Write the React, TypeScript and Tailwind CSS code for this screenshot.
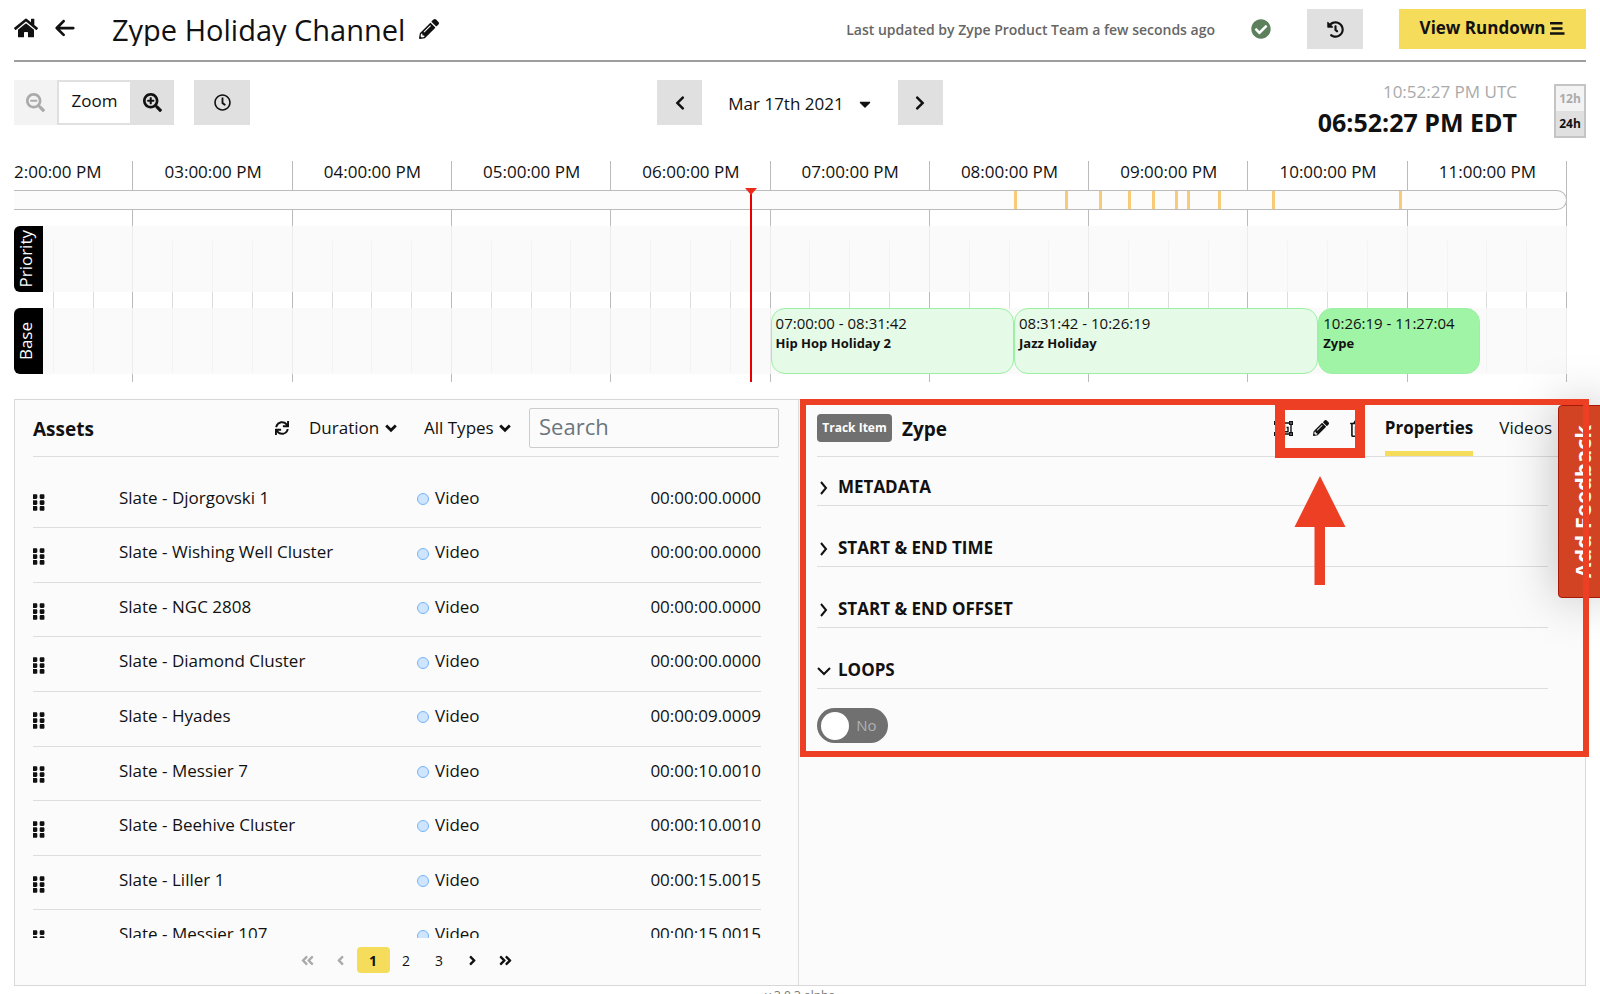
import React, { useState } from 'react';
import {
  FaAngleDoubleLeft,
  FaAngleDoubleRight,
  FaAngleLeft,
  FaAngleRight,
  FaCaretDown,
  FaCheckCircle,
  FaChevronLeft,
  FaChevronRight,
  FaGripVertical,
  FaHistory,
  FaHome,
  FaPencilAlt,
  FaRegClock,
  FaRegTrashAlt,
  FaSearchMinus,
  FaSearchPlus,
  FaSync,
} from 'react-icons/fa';
import { FaArrowLeft } from 'react-icons/fa6';

// visible window of the timeline, in hours
const WINDOW_START = 14.25;
const WINDOW_LENGTH = 9.75;

const toHours = (time: string) => {
  const [h, m, s] = time.split(':').map(Number);
  return h + m / 60 + s / 3600;
};
const percent = (time: string) => ((toHours(time) - WINDOW_START) / WINDOW_LENGTH) * 100;

const hours = ['03', '04', '05', '06', '07', '08', '09', '10', '11'];

const events = [
  { title: 'Hip Hop Holiday 2', label: '07:00:00 - 08:31:42', start: '19:00:00', end: '20:31:42', active: false },
  { title: 'Jazz Holiday', label: '08:31:42 - 10:26:19', start: '20:31:42', end: '22:26:19', active: false },
  { title: 'Zype', label: '10:26:19 - 11:27:04', start: '22:26:19', end: '23:27:04', active: true },
];

const adBreaks = [
  '20:32:00', '20:51:00', '21:04:00', '21:15:00', '21:24:00',
  '21:32:30', '21:37:00', '21:49:00', '22:09:00', '22:57:00',
];

const assets = [
  { name: 'Slate - Djorgovski 1', duration: '00:00:00.0000' },
  { name: 'Slate - Wishing Well Cluster', duration: '00:00:00.0000' },
  { name: 'Slate - NGC 2808', duration: '00:00:00.0000' },
  { name: 'Slate - Diamond Cluster', duration: '00:00:00.0000' },
  { name: 'Slate - Hyades', duration: '00:00:09.0009' },
  { name: 'Slate - Messier 7', duration: '00:00:10.0010' },
  { name: 'Slate - Beehive Cluster', duration: '00:00:10.0010' },
  { name: 'Slate - Liller 1', duration: '00:00:15.0015' },
  { name: 'Slate - Messier 107', duration: '00:00:15.0015' },
];

const RundownIcon = () => (
  <svg width="16" height="14" viewBox="0 0 16 14" fill="none" stroke="currentColor" strokeWidth="2.600">
    <path d="M1 2.300h12.500M2.500 7.500h11M1 12.500h14.500" />
  </svg>
);

const GroupIcon = () => (
  <svg width="19" height="15" viewBox="0 0 19 15" fill="none" stroke="currentColor" strokeWidth="1.400">
    <path d="M2 3.500v8M17 3.500v8M3.500 2h12M3.500 13h12" />
    <path d="M.7.7h2.600v2.600H.7zM15.700.7h2.600v2.600h-2.600zM.7 11.700h2.600v2.600H.7zM15.700 11.700h2.600v2.600h-2.600z" />
    <path d="M5 4.500h5.500v4H5zM12.500 6.500h1.500v4.200H8.500v-1" />
  </svg>
);

const Header = () => (
  <header className="flex h-[62px] shrink-0 items-start justify-between border-b-2 border-[#9e9e9e]">
    <div className="flex items-center">
      <a href="#" aria-label="Home" className="mt-[10px]"><FaHome size={24} /></a>
      <a href="#" aria-label="Back" className="mt-[10px] ml-4"><FaArrowLeft size={22} /></a>
      <h1 className="ml-9 h-[46px] overflow-hidden pt-[10px] text-[29px] leading-[40px]">Zype Holiday Channel</h1>
      <button aria-label="Rename channel" className="mt-[12px] ml-[14px]"><FaPencilAlt size={20} /></button>
    </div>
    <div className="flex h-[40px] items-center mt-[9px]">
      <p className="text-[14px] font-semibold text-[#666]">Last updated by Zype Product Team a few seconds ago</p>
      <FaCheckCircle size={20} className="ml-9 text-[#5c7f5c]" />
      <button aria-label="History" className="ml-9 flex h-[40px] w-[56px] items-center justify-center bg-[#e0e0e0]">
        <FaHistory size={17} />
      </button>
      <button className="ml-9 flex h-[40px] w-[187px] items-center justify-center gap-1 bg-[#f5dc5a] pb-[2px] text-[17px] font-bold">
        View Rundown
        <RundownIcon />
      </button>
    </div>
  </header>
);

const Toolbar = () => (
  <div className="mt-[18px] grid h-[60px] shrink-0 grid-cols-3 items-start">
    <div className="flex">
      <button disabled aria-label="Zoom out" className="flex h-[45px] w-[43px] items-center justify-center bg-[#f3f3f3] text-[#aaa]">
        <FaSearchMinus size={19} />
      </button>
      <span className="flex h-[45px] w-[73px] items-center justify-center border-2 border-r-0 border-[#e0e0e0] pb-1 text-[17px]">Zoom</span>
      <button aria-label="Zoom in" className="flex h-[45px] w-[44px] items-center justify-center bg-[#e0e0e0]">
        <FaSearchPlus size={19} />
      </button>
      <button aria-label="Jump to now" className="ml-5 flex h-[45px] w-[56px] items-center justify-center bg-[#e0e0e0]">
        <FaRegClock size={17} />
      </button>
    </div>
    <div className="flex justify-center">
      <button aria-label="Previous day" className="flex h-[45px] w-[45px] items-center justify-center bg-[#e0e0e0]">
        <FaChevronLeft size={16} />
      </button>
      <button className="mr-6 ml-[26px] flex h-[45px] items-center gap-3 pt-[2px] text-[17px]">
        Mar 17th 2021
        <FaCaretDown size={18} />
      </button>
      <button aria-label="Next day" className="flex h-[45px] w-[45px] items-center justify-center bg-[#e0e0e0]">
        <FaChevronRight size={16} />
      </button>
    </div>
    <div className="flex justify-end gap-[37px] pt-1">
      <div className="text-right">
        <p className="text-[17px] leading-[16px] text-[#aaa]">10:52:27 PM UTC</p>
        <p className="text-[25px] leading-[44px] font-bold">06:52:27 PM EDT</p>
      </div>
      <div className="flex h-[54px] w-[32px] flex-col border-2 border-[#c4c4c4] text-[12px] font-bold">
        <button className="flex-1 bg-[#f3f3f3] text-[#aaa]">12h</button>
        <button className="flex-1 bg-[#e0e0e0]">24h</button>
      </div>
    </div>
  </div>
);

const TrackRow = ({ name, children }: { name: string; children?: React.ReactNode }) => (
  <div className="relative flex h-[66px] bg-[#f9f9f9]/80">
    <div className="flex w-[29px] items-center justify-center rounded-l-md bg-black pr-[6px] text-white">
      <span className="rotate-180 text-[17px] font-medium [writing-mode:vertical-rl]">{name}</span>
    </div>
    {children}
  </div>
);

const Timeline = () => (
  <section aria-label="Timeline" className="relative mt-[21px] mr-[19px] h-[221px] shrink-0">
    {/* quarter-hour grid */}
    <div className="absolute inset-0 grid grid-cols-[repeat(39,1fr)]">
      {Array.from({ length: 39 }, (_, i) =>
        i % 4 === 2 ? (
          <div key={i} className="border-r border-[#bbb]" />
        ) : (
          <div key={i} className="mt-[80px] mb-[10px] border-r border-[#ddd]" />
        )
      )}
    </div>
    <div className="relative grid h-[29px] grid-cols-[3fr_repeat(9,4fr)] text-[17px] leading-[22px]">
      <div className="whitespace-nowrap">2:00:00 PM</div>
      {hours.map((h) => (
        <div key={h} className="text-center">{h}:00:00 PM</div>
      ))}
    </div>
    <div className="relative h-[20px] overflow-hidden rounded-r-[10px] border border-l-0 border-[#bbb] bg-[#fcfcfc]">
      {adBreaks.map((t) => (
        <div key={t} className="absolute h-full w-[3px] bg-[#f8cb78]" style={{ left: `${percent(t)}%` }} />
      ))}
    </div>
    <div className="mt-4 flex flex-col gap-4">
      <TrackRow name="Priority" />
      <TrackRow name="Base">
        {events.map((e) => (
          <div
            key={e.title}
            className={`absolute inset-y-0 overflow-hidden rounded-[14px] border border-[#9bf0a3] px-1 pt-1 whitespace-nowrap ${e.active ? 'bg-[#a0f4a6]' : 'bg-[#e5fae7]'}`}
            style={{ left: `${percent(e.start)}%`, width: `${percent(e.end) - percent(e.start)}%` }}
          >
            <p className="text-[15px] leading-[20px]">{e.label}</p>
            <p className="text-[13px] leading-[20px] font-bold">{e.title}</p>
          </div>
        ))}
      </TrackRow>
    </div>
    <div className="absolute top-[27px] bottom-0 w-[2px] -translate-x-1/2 bg-[#e80000]" style={{ left: `${percent('18:52:27')}%` }}>
      <svg width="12" height="7" viewBox="0 0 12 7" className="absolute -left-[5px]">
        <path d="M0 0h12L6 7z" fill="#ec2a1a" />
      </svg>
    </div>
  </section>
);

const Filter = ({ label }: { label: string }) => (
  <div className="relative flex items-center">
    <select aria-label={label} className="appearance-none bg-transparent pr-[17px] text-[17px]">
      <option>{label}</option>
    </select>
    <svg width="12" height="9" viewBox="0 0 12 9" fill="none" stroke="currentColor" strokeWidth="2.800" className="pointer-events-none absolute right-0">
      <path d="M1.200 1.500L6 6.300l4.800-4.800" />
    </svg>
  </div>
);

const AssetsPanel = () => (
  <section className="flex min-w-0 flex-col border-r border-[#ddd] pr-[19px] pl-[18px]">
    <div className="flex h-[57px] shrink-0 items-center border-b border-[#ddd]">
      <h2 className="flex-1 pt-[2px] text-[19px] font-bold">Assets</h2>
      <button aria-label="Refresh" className="mr-5"><FaSync size={14} /></button>
      <Filter label="Duration" />
      <div className="w-[27px]" />
      <Filter label="All Types" />
      <input
        type="text"
        aria-label="Search"
        placeholder="Search"
        className="ml-[18px] h-[40px] w-[250px] rounded-xs border border-[#ccc] px-[9px] pb-1 text-[22px] placeholder:text-[#6c757d]"
      />
    </div>
    <div className="mt-[17px] min-h-0 flex-1 overflow-hidden pr-[18px]">
      <table className="h-[491px] w-full table-fixed text-[17px]">
        <tbody>
          {assets.map((a) => (
            <tr key={a.name} className="border-b border-[#ddd]">
              <td className="w-[86px] pt-[3px]"><FaGripVertical size={19} className="-ml-1" /></td>
              <td className="w-[298px] pb-[6px]">{a.name}</td>
              <td className="pb-[6px]">
                <span className="flex items-center gap-[6px]">
                  <span className="mt-[3px] h-3 w-3 rounded-full border border-[#74b4fa] bg-[#cfe5fd]" />
                  Video
                </span>
              </td>
              <td className="pb-[6px] text-right">{a.duration}</td>
            </tr>
          ))}
        </tbody>
      </table>
    </div>
    <nav aria-label="Pages" className="mx-auto mt-[9px] mb-[12px] flex h-[26px] shrink-0 items-center text-[14px]">
      <button disabled aria-label="First page" className="flex w-[33px] justify-center text-[#aaa]"><FaAngleDoubleLeft size={15} /></button>
      <button disabled aria-label="Previous page" className="flex w-[33px] justify-center text-[#aaa]"><FaAngleLeft size={15} /></button>
      <button className="h-[26px] w-[33px] rounded bg-[#f5dc5a] font-bold">1</button>
      <button className="w-[33px]">2</button>
      <button className="w-[33px]">3</button>
      <button aria-label="Next page" className="flex w-[33px] justify-center"><FaAngleRight size={15} /></button>
      <button aria-label="Last page" className="flex w-[33px] justify-center"><FaAngleDoubleRight size={15} /></button>
    </nav>
  </section>
);

const Section = ({ title, open }: { title: string; open?: boolean }) => (
  <button className="mr-[19px] flex h-[61px] items-end border-b border-[#ddd] pb-[6px] text-[17px] font-bold">
    <span className="mb-1 flex w-[21px]">
      {open ? (
        <svg width="14" height="14" viewBox="0 0 14 14" fill="none" stroke="currentColor" strokeWidth="2"><path d="M1 4l6 6 6-6" /></svg>
      ) : (
        <svg width="14" height="14" viewBox="0 0 14 14" fill="none" stroke="currentColor" strokeWidth="2"><path d="M4 1l5 6-5 6" /></svg>
      )}
    </span>
    {title}
  </button>
);

const DetailsPanel = () => {
  const [loops, setLoops] = useState(false);

  return (
    <section className="relative flex min-w-0 flex-col pr-[18px] pl-[18px]">
      <div className="flex h-[57px] shrink-0 items-center border-b border-[#ddd]">
        <span className="flex h-[28px] w-[75px] items-center justify-center rounded bg-[#707070] text-[12px] font-bold whitespace-nowrap text-white">Track Item</span>
        <h2 className="ml-[10px] flex-1 pt-[2px] text-[19px] font-bold">Zype</h2>
        <button aria-label="Group"><GroupIcon /></button>
        <button aria-label="Edit" className="ml-5"><FaPencilAlt size={16} /></button>
        <button aria-label="Delete" className="ml-5"><FaRegTrashAlt size={17} /></button>
        <div className="ml-[19px] flex gap-[26px] text-[17px]">
          <button className="mt-[2px] h-[54px] border-b-[5px] border-[#f5dc5a] pt-[2px] font-bold">Properties</button>
          <button className="mt-[2px] mr-[15px] h-[54px] border-b-[5px] border-transparent pt-[2px]">Videos</button>
        </div>
      </div>
      <div className="-mt-3 flex flex-col">
        <Section title="METADATA" />
        <Section title="START & END TIME" />
        <Section title="START & END OFFSET" />
        <Section title="LOOPS" open />
      </div>
      <label className="mt-[19px] flex h-[35px] w-[71px] items-center rounded-full bg-[#707070] p-1 text-[15px] text-[#b0b0b0]">
        <input type="checkbox" className="peer sr-only" checked={loops} onChange={(e) => setLoops(e.target.checked)} />
        <span className="h-[28px] w-[28px] rounded-full bg-white peer-checked:order-last" />
        <span className="flex-1 text-center">{loops ? 'Yes' : 'No'}</span>
      </label>

      <button className="absolute top-[5px] -right-[21px] z-10 flex h-[193px] w-[48px] items-center justify-center rounded-l border border-[#a81a08] bg-[#d24323] text-[22px] font-bold text-white shadow-[0_0_50px_rgba(0,0,0,0.25)]">
        <span className="rotate-180 [writing-mode:vertical-rl]">Add Feedback</span>
      </button>

      {/* annotation: highlighted panel, edit button and arrow */}
      <div className="pointer-events-none absolute top-[-1px] -right-[4px] left-px z-20 h-[358px] border-6 border-[#ec3f23]" />
      <div className="pointer-events-none absolute top-0 right-[220px] z-20 h-[58px] w-[90px] border-10 border-[#ec3f23]" />
      <svg width="52" height="110" viewBox="0 0 52 110" className="pointer-events-none absolute top-[76px] right-[239px] z-20" fill="#ec3f23">
        <path d="M26 0l25.500 51H31v58H20.500V51H0.500z" />
      </svg>
    </section>
  );
};

const App = () => {
  return (
    <div className="flex h-screen flex-col overflow-hidden bg-white px-[14px] font-['Open_Sans',sans-serif] text-[#111]">
      <Header />
      <Toolbar />
      <Timeline />
      <main className="mt-[17px] grid min-h-0 flex-1 grid-cols-[785fr_787fr] grid-rows-[minmax(0,1fr)] border border-[#d8d8d8] bg-[#fbfbfb]">
        <AssetsPanel />
        <DetailsPanel />
      </main>
      <footer className="h-[8px] shrink-0 text-center text-[12px] leading-[20px] text-[#777]">v 3.0.3 alpha</footer>
    </div>
  );
};

export default App;
